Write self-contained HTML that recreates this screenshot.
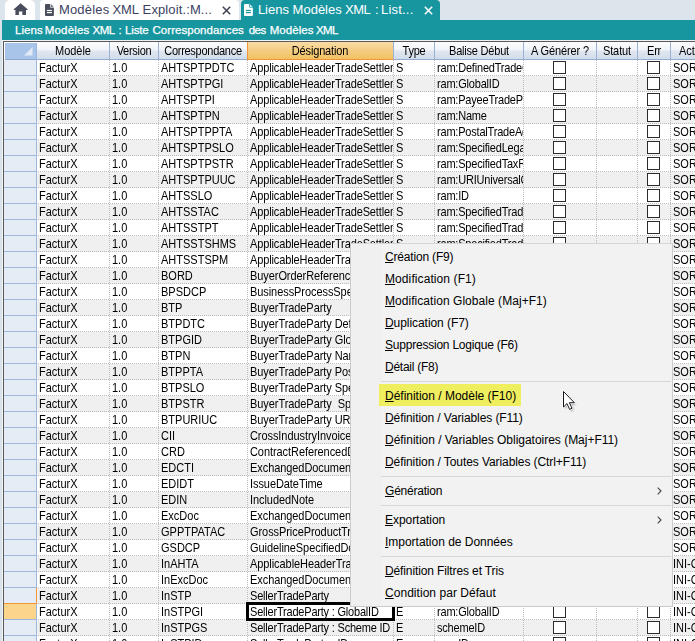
<!DOCTYPE html>
<html lang="fr"><head><meta charset="utf-8"><title>Liens Modèles XML</title>
<style>
html,body{margin:0;padding:0}
body{width:695px;height:641px;overflow:hidden;position:relative;background:#fff;font-family:"Liberation Sans",sans-serif;font-size:11px;color:#000}
#tabbar{position:absolute;left:0;top:0;width:695px;height:20px;background:#dde5ec}
#leftstrip{z-index:3;position:absolute;left:0;top:20px;width:2px;height:621px;background:#dbe3ea}
#leftstrip2{z-index:3;position:absolute;left:2px;top:40px;width:1px;height:601px;background:#eff3f6}
.tab{position:absolute;top:0;height:20px;border-radius:4px 4px 0 0;font-size:13px;line-height:20px;white-space:nowrap}
#t0{left:5px;width:30px;background:#fff;border-radius:5px 5px 0 0}
#t1{left:40px;width:199px;background:#fff;color:#3c4262;letter-spacing:-0.15px}
#t2{left:241px;width:199px;background:#18969f;color:#fff;letter-spacing:-0.1px}
.tab svg{position:absolute}
.tab span{position:absolute;top:0}
#title{position:absolute;left:2px;top:20px;width:693px;height:20px;background:#18969f;color:#fff;font-weight:normal;-webkit-text-stroke:0.25px #fff;font-size:11.5px;line-height:20px;white-space:nowrap}
#title span{position:absolute;top:0}
#gap{position:absolute;left:3px;top:40px;width:692px;height:1px;background:#eef2f5}
#gtop{z-index:3;position:absolute;left:3px;top:41px;width:692px;height:1px;background:#5a5a5a}
#gleft{z-index:3;position:absolute;left:3px;top:41px;width:1px;height:600px;background:#5a5a5a}
#grid{position:absolute;left:0;top:0;width:695px;height:641px}
.hrow{position:absolute;left:0;top:42px;width:695px;height:18px}
.cornerbg{position:absolute;left:4px;top:0;width:33px;height:18px;background:#fff}
.corner{position:absolute;left:5px;top:1px;width:31px;height:16px;background:#a9c4e9;border-right:1px solid #9db7dc;border-bottom:1px solid #8fabd3}
.corner svg{position:absolute;left:19px;top:4px}
.hc{position:absolute;top:0;height:17px;border-right:1px solid #9ab2d5;border-bottom:1px solid #93add2;background:linear-gradient(#fcfdfe 0%,#f1f4f9 45%,#dfe6f0 55%,#d3dcea 100%);text-align:center;line-height:18px;white-space:nowrap;overflow:hidden;font-size:11px;letter-spacing:-0.25px}
.hc.sel{background:linear-gradient(#f9dca6 0%,#f5cd82 50%,#f1c263 100%);border-bottom:1px solid #f29536;box-shadow:inset 1px 0 0 #f29536}
.row{position:absolute;left:0;width:695px;height:15px;border-bottom:1px dotted #bcbcbc;background:#fff}
.row.alt{background:#f0f0f0}
.rh{position:absolute;left:4px;top:0;width:32px;height:15px;background:#e6ecf6;border-right:1px solid #9db7dc;border-bottom:1px solid #9db7dc}
.rh.cur{background:#fdd48c}
.rh.prev{border-right-color:#f29536;border-bottom-color:#f29536}
.c{letter-spacing:0;position:absolute;top:0;height:15px;line-height:15px;border-right:1px dotted #bcbcbc;padding-left:2px;box-sizing:border-box;white-space:nowrap;overflow:hidden}
.c.ck{padding:0}
.c.d{letter-spacing:-0.12px}
.c.e{letter-spacing:-0.07px}
.c.f{letter-spacing:-0.2px}
.c.b{letter-spacing:-0.2px}
.cb{position:absolute;left:50%;margin-left:-7px;top:1px;width:11px;height:11px;border:1px solid #2b2b2b;background:#fff;display:block}
.focus{position:absolute;left:246px;top:602px;width:143px;height:13px;border:3px solid #000}
#menu{position:absolute;left:350px;top:243px;width:321px;height:362px;background:#f2f2f2;border:1px solid #cbcbcb;border-top-color:#d6d6d6;font-size:12px;color:#000}
.mi{position:absolute;left:1px;width:320px;height:22px;line-height:22px;white-space:nowrap}
.mi span{position:absolute;left:33px;top:0}
.mi u{text-decoration:underline;text-underline-offset:1px}
.ms{position:absolute;left:30px;width:290px;height:1px;background:#d7d7d7}
.hl{position:absolute;left:28px;width:142px;height:22px;background:#efee5e}
.chev{position:absolute;left:305.3px}
#cursor{position:absolute;left:560px;top:388px}
.t{display:inline-block;transform:scaleY(1.125);transform-origin:0 11.3px;position:relative;top:1px}
.hc span{display:inline-block;transform:scaleY(1.125);transform-origin:0 12.8px}
#gut{position:absolute;left:0;top:0;width:30px;height:362px;background:#f0f0f0}
</style></head><body>
<div id="tabbar">
<div class="tab" id="t0"><svg style="left:0;top:0" width="30" height="20" viewBox="0 0 30 20"><path d="M15.6 3.2 L22.6 9.3 L22.6 9.9 L21 9.9 L21 14.9 L17.3 14.9 L17.3 11.4 L13.9 11.4 L13.9 14.9 L10.4 14.9 L10.4 9.9 L8.8 9.9 L8.8 9.3 Z" fill="#494d5c"/></svg></div>
<div class="tab" id="t1"><svg style="left:5.3px;top:4.2px" width="10" height="12" viewBox="0 0 10 12"><path d="M1 0 H5.6 L8.9 3.3 V11 Q8.9 12 7.9 12 H1 Q0 12 0 11 V1 Q0 0 1 0 Z" fill="#494d5c"/><rect x="1.9" y="5.9" width="5" height="1.2" fill="#fff"/><rect x="1.9" y="8" width="5" height="1.2" fill="#fff"/><path d="M5.6 0 V3.3 H8.9" fill="none" stroke="#fff" stroke-width="0.8"/></svg><span style="left:18.9px;letter-spacing:0.2px">Modèles</span> <span style="left:72.5px;letter-spacing:-0.15px">XML</span> <span style="left:102.6px;letter-spacing:0.12px">Exploit.:M...</span><svg style="left:182px;top:6px" width="9" height="9" viewBox="0 0 9 9"><path d="M0.8 0.8 L8.2 8.2 M8.2 0.8 L0.8 8.2" stroke="#3c4050" stroke-width="1.5" fill="none"/></svg></div>
<div class="tab" id="t2"><svg style="left:3.3px;top:4.2px" width="10" height="12" viewBox="0 0 10 12"><path d="M1 0 H5.6 L8.9 3.3 V11 Q8.9 12 7.9 12 H1 Q0 12 0 11 V1 Q0 0 1 0 Z" fill="#fff"/><rect x="1.9" y="5.9" width="5" height="1.2" fill="#18969f"/><rect x="1.9" y="8" width="5" height="1.2" fill="#18969f"/><path d="M5.6 0 V3.3 H8.9" fill="none" stroke="#18969f" stroke-width="0.8"/></svg><span style="left:16.9px;letter-spacing:0">Liens</span> <span style="left:51.6px;letter-spacing:0">Modèles</span> <span style="left:104.1px;letter-spacing:-0.5px">XML</span> <span style="left:133.9px">:</span> <span style="left:140px;letter-spacing:0.2px">List...</span><svg style="left:183px;top:6px" width="9" height="9" viewBox="0 0 9 9"><path d="M0.8 0.8 L8.2 8.2 M8.2 0.8 L0.8 8.2" stroke="#fff" stroke-width="1.5" fill="none"/></svg></div>
</div>
<div id="leftstrip"></div><div id="leftstrip2"></div>
<div id="title"><span style="left:13.1px;letter-spacing:0.04px">Liens</span> <span style="left:42.8px;letter-spacing:0.16px">Modèles</span> <span style="left:90.6px;letter-spacing:-0.55px">XML</span> <span style="left:116.5px;letter-spacing:0.00px">:</span> <span style="left:123.1px;letter-spacing:-0.19px">Liste</span> <span style="left:150.5px;letter-spacing:0.04px">Correspondances</span> <span style="left:246.7px;letter-spacing:-0.49px">des</span> <span style="left:267.7px;letter-spacing:0.06px">Modèles</span> <span style="left:313.9px;letter-spacing:-0.55px">XML</span></div>
<div id="gap"></div><div id="gtop"></div><div id="gleft"></div>
<div id="grid">
<div class="hrow">
<div class="cornerbg"></div><div class="corner"><svg width="9" height="9" viewBox="0 0 9 9"><polygon points="8.5,0 8.5,8.5 0,8.5" fill="#e1eaf7"/></svg></div>
<div class="hc" style="left:37px;width:72px"><span style="letter-spacing:-0.05px">Modèle</span></div>
<div class="hc" style="left:110px;width:48px"><span style="letter-spacing:-0.28px">Version</span></div>
<div class="hc" style="left:159px;width:88px"><span style="letter-spacing:-0.27px">Correspondance</span></div>
<div class="hc sel" style="left:247px;width:146px"><span style="letter-spacing:-0.15px">Désignation</span></div>
<div class="hc" style="left:394px;width:40px"><span style="letter-spacing:-0.2px">Type</span></div>
<div class="hc" style="left:435px;width:88px"><span style="letter-spacing:-0.2px">Balise Début</span></div>
<div class="hc" style="left:524px;width:72px"><span style="letter-spacing:-0.1px">A Générer ?</span></div>
<div class="hc" style="left:597px;width:40px"><span style="letter-spacing:-0.1px">Statut</span></div>
<div class="hc" style="left:638px;width:32px"><span style="letter-spacing:-0.3px">Err</span></div>
<div class="hc" style="left:671px;width:29px;text-align:left;padding-left:8px"><span style="letter-spacing:-0.1px">Action</span></div>
</div>
<div class="row" style="top:60px"><div class="rh"></div><div class="c" style="left:37px;width:73px"><span class="t">FacturX</span></div><div class="c" style="left:110px;width:49px"><span class="t">1.0</span></div><div class="c" style="left:159px;width:89px"><span class="t">AHTSPTPDTC</span></div><div class="c d" style="left:248px;width:146px"><span class="t">ApplicableHeaderTradeSettlement</span></div><div class="c" style="left:394px;width:41px"><span class="t">S</span></div><div class="c b" style="left:435px;width:89px"><span class="t">ram:DefinedTradeContact</span></div><div class="c ck" style="left:524px;width:73px"><i class="cb"></i></div><div class="c" style="left:597px;width:41px"></div><div class="c ck" style="left:638px;width:33px"><i class="cb"></i></div><div class="c" style="left:671px;width:30px"><span class="t">SORTIE</span></div></div>
<div class="row alt" style="top:76px"><div class="rh"></div><div class="c" style="left:37px;width:73px"><span class="t">FacturX</span></div><div class="c" style="left:110px;width:49px"><span class="t">1.0</span></div><div class="c" style="left:159px;width:89px"><span class="t">AHTSPTPGI</span></div><div class="c d" style="left:248px;width:146px"><span class="t">ApplicableHeaderTradeSettlement</span></div><div class="c" style="left:394px;width:41px"><span class="t">S</span></div><div class="c b" style="left:435px;width:89px"><span class="t">ram:GlobalID</span></div><div class="c ck" style="left:524px;width:73px"><i class="cb"></i></div><div class="c" style="left:597px;width:41px"></div><div class="c ck" style="left:638px;width:33px"><i class="cb"></i></div><div class="c" style="left:671px;width:30px"><span class="t">SORTIE</span></div></div>
<div class="row" style="top:92px"><div class="rh"></div><div class="c" style="left:37px;width:73px"><span class="t">FacturX</span></div><div class="c" style="left:110px;width:49px"><span class="t">1.0</span></div><div class="c" style="left:159px;width:89px"><span class="t">AHTSPTPI</span></div><div class="c d" style="left:248px;width:146px"><span class="t">ApplicableHeaderTradeSettlement</span></div><div class="c" style="left:394px;width:41px"><span class="t">S</span></div><div class="c b" style="left:435px;width:89px"><span class="t">ram:PayeeTradeParty</span></div><div class="c ck" style="left:524px;width:73px"><i class="cb"></i></div><div class="c" style="left:597px;width:41px"></div><div class="c ck" style="left:638px;width:33px"><i class="cb"></i></div><div class="c" style="left:671px;width:30px"><span class="t">SORTIE</span></div></div>
<div class="row alt" style="top:108px"><div class="rh"></div><div class="c" style="left:37px;width:73px"><span class="t">FacturX</span></div><div class="c" style="left:110px;width:49px"><span class="t">1.0</span></div><div class="c" style="left:159px;width:89px"><span class="t">AHTSPTPN</span></div><div class="c d" style="left:248px;width:146px"><span class="t">ApplicableHeaderTradeSettlement</span></div><div class="c" style="left:394px;width:41px"><span class="t">S</span></div><div class="c b" style="left:435px;width:89px"><span class="t">ram:Name</span></div><div class="c ck" style="left:524px;width:73px"><i class="cb"></i></div><div class="c" style="left:597px;width:41px"></div><div class="c ck" style="left:638px;width:33px"><i class="cb"></i></div><div class="c" style="left:671px;width:30px"><span class="t">SORTIE</span></div></div>
<div class="row" style="top:124px"><div class="rh"></div><div class="c" style="left:37px;width:73px"><span class="t">FacturX</span></div><div class="c" style="left:110px;width:49px"><span class="t">1.0</span></div><div class="c" style="left:159px;width:89px"><span class="t">AHTSPTPPTA</span></div><div class="c d" style="left:248px;width:146px"><span class="t">ApplicableHeaderTradeSettlement</span></div><div class="c" style="left:394px;width:41px"><span class="t">S</span></div><div class="c b" style="left:435px;width:89px"><span class="t">ram:PostalTradeAddress</span></div><div class="c ck" style="left:524px;width:73px"><i class="cb"></i></div><div class="c" style="left:597px;width:41px"></div><div class="c ck" style="left:638px;width:33px"><i class="cb"></i></div><div class="c" style="left:671px;width:30px"><span class="t">SORTIE</span></div></div>
<div class="row alt" style="top:140px"><div class="rh"></div><div class="c" style="left:37px;width:73px"><span class="t">FacturX</span></div><div class="c" style="left:110px;width:49px"><span class="t">1.0</span></div><div class="c" style="left:159px;width:89px"><span class="t">AHTSPTPSLO</span></div><div class="c d" style="left:248px;width:146px"><span class="t">ApplicableHeaderTradeSettlement</span></div><div class="c" style="left:394px;width:41px"><span class="t">S</span></div><div class="c b" style="left:435px;width:89px"><span class="t">ram:SpecifiedLegalOrganization</span></div><div class="c ck" style="left:524px;width:73px"><i class="cb"></i></div><div class="c" style="left:597px;width:41px"></div><div class="c ck" style="left:638px;width:33px"><i class="cb"></i></div><div class="c" style="left:671px;width:30px"><span class="t">SORTIE</span></div></div>
<div class="row" style="top:156px"><div class="rh"></div><div class="c" style="left:37px;width:73px"><span class="t">FacturX</span></div><div class="c" style="left:110px;width:49px"><span class="t">1.0</span></div><div class="c" style="left:159px;width:89px"><span class="t">AHTSPTPSTR</span></div><div class="c d" style="left:248px;width:146px"><span class="t">ApplicableHeaderTradeSettlement</span></div><div class="c" style="left:394px;width:41px"><span class="t">S</span></div><div class="c b" style="left:435px;width:89px"><span class="t">ram:SpecifiedTaxRegistration</span></div><div class="c ck" style="left:524px;width:73px"><i class="cb"></i></div><div class="c" style="left:597px;width:41px"></div><div class="c ck" style="left:638px;width:33px"><i class="cb"></i></div><div class="c" style="left:671px;width:30px"><span class="t">SORTIE</span></div></div>
<div class="row alt" style="top:172px"><div class="rh"></div><div class="c" style="left:37px;width:73px"><span class="t">FacturX</span></div><div class="c" style="left:110px;width:49px"><span class="t">1.0</span></div><div class="c" style="left:159px;width:89px"><span class="t">AHTSPTPUUC</span></div><div class="c d" style="left:248px;width:146px"><span class="t">ApplicableHeaderTradeSettlement</span></div><div class="c" style="left:394px;width:41px"><span class="t">S</span></div><div class="c b" style="left:435px;width:89px"><span class="t">ram:URIUniversalCommunication</span></div><div class="c ck" style="left:524px;width:73px"><i class="cb"></i></div><div class="c" style="left:597px;width:41px"></div><div class="c ck" style="left:638px;width:33px"><i class="cb"></i></div><div class="c" style="left:671px;width:30px"><span class="t">SORTIE</span></div></div>
<div class="row" style="top:188px"><div class="rh"></div><div class="c" style="left:37px;width:73px"><span class="t">FacturX</span></div><div class="c" style="left:110px;width:49px"><span class="t">1.0</span></div><div class="c" style="left:159px;width:89px"><span class="t">AHTSSLO</span></div><div class="c d" style="left:248px;width:146px"><span class="t">ApplicableHeaderTradeSettlement</span></div><div class="c" style="left:394px;width:41px"><span class="t">S</span></div><div class="c b" style="left:435px;width:89px"><span class="t">ram:ID</span></div><div class="c ck" style="left:524px;width:73px"><i class="cb"></i></div><div class="c" style="left:597px;width:41px"></div><div class="c ck" style="left:638px;width:33px"><i class="cb"></i></div><div class="c" style="left:671px;width:30px"><span class="t">SORTIE</span></div></div>
<div class="row alt" style="top:204px"><div class="rh"></div><div class="c" style="left:37px;width:73px"><span class="t">FacturX</span></div><div class="c" style="left:110px;width:49px"><span class="t">1.0</span></div><div class="c" style="left:159px;width:89px"><span class="t">AHTSSTAC</span></div><div class="c d" style="left:248px;width:146px"><span class="t">ApplicableHeaderTradeSettlement</span></div><div class="c" style="left:394px;width:41px"><span class="t">S</span></div><div class="c b" style="left:435px;width:89px"><span class="t">ram:SpecifiedTradeAllowanceCharge</span></div><div class="c ck" style="left:524px;width:73px"><i class="cb"></i></div><div class="c" style="left:597px;width:41px"></div><div class="c ck" style="left:638px;width:33px"><i class="cb"></i></div><div class="c" style="left:671px;width:30px"><span class="t">SORTIE</span></div></div>
<div class="row" style="top:220px"><div class="rh"></div><div class="c" style="left:37px;width:73px"><span class="t">FacturX</span></div><div class="c" style="left:110px;width:49px"><span class="t">1.0</span></div><div class="c" style="left:159px;width:89px"><span class="t">AHTSSTPT</span></div><div class="c d" style="left:248px;width:146px"><span class="t">ApplicableHeaderTradeSettlement</span></div><div class="c" style="left:394px;width:41px"><span class="t">S</span></div><div class="c b" style="left:435px;width:89px"><span class="t">ram:SpecifiedTradePaymentTerms</span></div><div class="c ck" style="left:524px;width:73px"><i class="cb"></i></div><div class="c" style="left:597px;width:41px"></div><div class="c ck" style="left:638px;width:33px"><i class="cb"></i></div><div class="c" style="left:671px;width:30px"><span class="t">SORTIE</span></div></div>
<div class="row alt" style="top:236px"><div class="rh"></div><div class="c" style="left:37px;width:73px"><span class="t">FacturX</span></div><div class="c" style="left:110px;width:49px"><span class="t">1.0</span></div><div class="c" style="left:159px;width:89px"><span class="t">AHTSSTSHMS</span></div><div class="c d" style="left:248px;width:146px"><span class="t">ApplicableHeaderTradeSettlement</span></div><div class="c" style="left:394px;width:41px"><span class="t">S</span></div><div class="c b" style="left:435px;width:89px"><span class="t">ram:SpecifiedTradeSettlementHeader</span></div><div class="c ck" style="left:524px;width:73px"><i class="cb"></i></div><div class="c" style="left:597px;width:41px"></div><div class="c ck" style="left:638px;width:33px"><i class="cb"></i></div><div class="c" style="left:671px;width:30px"><span class="t">SORTIE</span></div></div>
<div class="row" style="top:252px"><div class="rh"></div><div class="c" style="left:37px;width:73px"><span class="t">FacturX</span></div><div class="c" style="left:110px;width:49px"><span class="t">1.0</span></div><div class="c" style="left:159px;width:89px"><span class="t">AHTSSTSPM</span></div><div class="c d" style="left:248px;width:146px"><span class="t">ApplicableHeaderTradeSettlement</span></div><div class="c" style="left:394px;width:41px"><span class="t">S</span></div><div class="c b" style="left:435px;width:89px"><span class="t">ram:SpecifiedTradeSettlementPayment</span></div><div class="c ck" style="left:524px;width:73px"><i class="cb"></i></div><div class="c" style="left:597px;width:41px"></div><div class="c ck" style="left:638px;width:33px"><i class="cb"></i></div><div class="c" style="left:671px;width:30px"><span class="t">SORTIE</span></div></div>
<div class="row alt" style="top:268px"><div class="rh"></div><div class="c" style="left:37px;width:73px"><span class="t">FacturX</span></div><div class="c" style="left:110px;width:49px"><span class="t">1.0</span></div><div class="c" style="left:159px;width:89px"><span class="t">BORD</span></div><div class="c e" style="left:248px;width:146px"><span class="t">BuyerOrderReferencedDocument</span></div><div class="c" style="left:394px;width:41px"><span class="t">S</span></div><div class="c b" style="left:435px;width:89px"><span class="t">ram:BuyerOrderReferencedDocument</span></div><div class="c ck" style="left:524px;width:73px"><i class="cb"></i></div><div class="c" style="left:597px;width:41px"></div><div class="c ck" style="left:638px;width:33px"><i class="cb"></i></div><div class="c" style="left:671px;width:30px"><span class="t">SORTIE</span></div></div>
<div class="row" style="top:284px"><div class="rh"></div><div class="c" style="left:37px;width:73px"><span class="t">FacturX</span></div><div class="c" style="left:110px;width:49px"><span class="t">1.0</span></div><div class="c" style="left:159px;width:89px"><span class="t">BPSDCP</span></div><div class="c e" style="left:248px;width:146px"><span class="t">BusinessProcessSpecifiedDocument</span></div><div class="c" style="left:394px;width:41px"><span class="t">S</span></div><div class="c b" style="left:435px;width:89px"><span class="t">ram:BusinessProcessSpecified</span></div><div class="c ck" style="left:524px;width:73px"><i class="cb"></i></div><div class="c" style="left:597px;width:41px"></div><div class="c ck" style="left:638px;width:33px"><i class="cb"></i></div><div class="c" style="left:671px;width:30px"><span class="t">SORTIE</span></div></div>
<div class="row alt" style="top:300px"><div class="rh"></div><div class="c" style="left:37px;width:73px"><span class="t">FacturX</span></div><div class="c" style="left:110px;width:49px"><span class="t">1.0</span></div><div class="c" style="left:159px;width:89px"><span class="t">BTP</span></div><div class="c e" style="left:248px;width:146px"><span class="t">BuyerTradeParty</span></div><div class="c" style="left:394px;width:41px"><span class="t">S</span></div><div class="c b" style="left:435px;width:89px"><span class="t">ram:BuyerTradeParty</span></div><div class="c ck" style="left:524px;width:73px"><i class="cb"></i></div><div class="c" style="left:597px;width:41px"></div><div class="c ck" style="left:638px;width:33px"><i class="cb"></i></div><div class="c" style="left:671px;width:30px"><span class="t">SORTIE</span></div></div>
<div class="row" style="top:316px"><div class="rh"></div><div class="c" style="left:37px;width:73px"><span class="t">FacturX</span></div><div class="c" style="left:110px;width:49px"><span class="t">1.0</span></div><div class="c" style="left:159px;width:89px"><span class="t">BTPDTC</span></div><div class="c e" style="left:248px;width:146px"><span class="t">BuyerTradeParty DefinedTradeContact</span></div><div class="c" style="left:394px;width:41px"><span class="t">S</span></div><div class="c b" style="left:435px;width:89px"><span class="t">ram:DefinedTradeContact</span></div><div class="c ck" style="left:524px;width:73px"><i class="cb"></i></div><div class="c" style="left:597px;width:41px"></div><div class="c ck" style="left:638px;width:33px"><i class="cb"></i></div><div class="c" style="left:671px;width:30px"><span class="t">SORTIE</span></div></div>
<div class="row alt" style="top:332px"><div class="rh"></div><div class="c" style="left:37px;width:73px"><span class="t">FacturX</span></div><div class="c" style="left:110px;width:49px"><span class="t">1.0</span></div><div class="c" style="left:159px;width:89px"><span class="t">BTPGID</span></div><div class="c e" style="left:248px;width:146px"><span class="t">BuyerTradeParty GlobalID</span></div><div class="c" style="left:394px;width:41px"><span class="t">S</span></div><div class="c b" style="left:435px;width:89px"><span class="t">ram:GlobalID</span></div><div class="c ck" style="left:524px;width:73px"><i class="cb"></i></div><div class="c" style="left:597px;width:41px"></div><div class="c ck" style="left:638px;width:33px"><i class="cb"></i></div><div class="c" style="left:671px;width:30px"><span class="t">SORTIE</span></div></div>
<div class="row" style="top:348px"><div class="rh"></div><div class="c" style="left:37px;width:73px"><span class="t">FacturX</span></div><div class="c" style="left:110px;width:49px"><span class="t">1.0</span></div><div class="c" style="left:159px;width:89px"><span class="t">BTPN</span></div><div class="c e" style="left:248px;width:146px"><span class="t">BuyerTradeParty Name</span></div><div class="c" style="left:394px;width:41px"><span class="t">S</span></div><div class="c b" style="left:435px;width:89px"><span class="t">ram:Name</span></div><div class="c ck" style="left:524px;width:73px"><i class="cb"></i></div><div class="c" style="left:597px;width:41px"></div><div class="c ck" style="left:638px;width:33px"><i class="cb"></i></div><div class="c" style="left:671px;width:30px"><span class="t">SORTIE</span></div></div>
<div class="row alt" style="top:364px"><div class="rh"></div><div class="c" style="left:37px;width:73px"><span class="t">FacturX</span></div><div class="c" style="left:110px;width:49px"><span class="t">1.0</span></div><div class="c" style="left:159px;width:89px"><span class="t">BTPPTA</span></div><div class="c e" style="left:248px;width:146px"><span class="t">BuyerTradeParty PostalTradeAddress</span></div><div class="c" style="left:394px;width:41px"><span class="t">S</span></div><div class="c b" style="left:435px;width:89px"><span class="t">ram:PostalTradeAddress</span></div><div class="c ck" style="left:524px;width:73px"><i class="cb"></i></div><div class="c" style="left:597px;width:41px"></div><div class="c ck" style="left:638px;width:33px"><i class="cb"></i></div><div class="c" style="left:671px;width:30px"><span class="t">SORTIE</span></div></div>
<div class="row" style="top:380px"><div class="rh"></div><div class="c" style="left:37px;width:73px"><span class="t">FacturX</span></div><div class="c" style="left:110px;width:49px"><span class="t">1.0</span></div><div class="c" style="left:159px;width:89px"><span class="t">BTPSLO</span></div><div class="c e" style="left:248px;width:146px"><span class="t">BuyerTradeParty SpecifiedLegalOrganization</span></div><div class="c" style="left:394px;width:41px"><span class="t">S</span></div><div class="c b" style="left:435px;width:89px"><span class="t">ram:SpecifiedLegalOrganization</span></div><div class="c ck" style="left:524px;width:73px"><i class="cb"></i></div><div class="c" style="left:597px;width:41px"></div><div class="c ck" style="left:638px;width:33px"><i class="cb"></i></div><div class="c" style="left:671px;width:30px"><span class="t">SORTIE</span></div></div>
<div class="row alt" style="top:396px"><div class="rh"></div><div class="c" style="left:37px;width:73px"><span class="t">FacturX</span></div><div class="c" style="left:110px;width:49px"><span class="t">1.0</span></div><div class="c" style="left:159px;width:89px"><span class="t">BTPSTR</span></div><div class="c e" style="left:248px;width:146px"><span class="t">BuyerTradeParty&nbsp; SpecifiedTaxRegistration</span></div><div class="c" style="left:394px;width:41px"><span class="t">S</span></div><div class="c b" style="left:435px;width:89px"><span class="t">ram:SpecifiedTaxRegistration</span></div><div class="c ck" style="left:524px;width:73px"><i class="cb"></i></div><div class="c" style="left:597px;width:41px"></div><div class="c ck" style="left:638px;width:33px"><i class="cb"></i></div><div class="c" style="left:671px;width:30px"><span class="t">SORTIE</span></div></div>
<div class="row" style="top:412px"><div class="rh"></div><div class="c" style="left:37px;width:73px"><span class="t">FacturX</span></div><div class="c" style="left:110px;width:49px"><span class="t">1.0</span></div><div class="c" style="left:159px;width:89px"><span class="t">BTPURIUC</span></div><div class="c e" style="left:248px;width:146px"><span class="t">BuyerTradeParty URIUniversalCommunication</span></div><div class="c" style="left:394px;width:41px"><span class="t">S</span></div><div class="c b" style="left:435px;width:89px"><span class="t">ram:URIUniversalCommunication</span></div><div class="c ck" style="left:524px;width:73px"><i class="cb"></i></div><div class="c" style="left:597px;width:41px"></div><div class="c ck" style="left:638px;width:33px"><i class="cb"></i></div><div class="c" style="left:671px;width:30px"><span class="t">SORTIE</span></div></div>
<div class="row alt" style="top:428px"><div class="rh"></div><div class="c" style="left:37px;width:73px"><span class="t">FacturX</span></div><div class="c" style="left:110px;width:49px"><span class="t">1.0</span></div><div class="c" style="left:159px;width:89px"><span class="t">CII</span></div><div class="c e" style="left:248px;width:146px"><span class="t">CrossIndustryInvoice</span></div><div class="c" style="left:394px;width:41px"><span class="t">S</span></div><div class="c b" style="left:435px;width:89px"><span class="t">rsm:CrossIndustryInvoice</span></div><div class="c ck" style="left:524px;width:73px"><i class="cb"></i></div><div class="c" style="left:597px;width:41px"></div><div class="c ck" style="left:638px;width:33px"><i class="cb"></i></div><div class="c" style="left:671px;width:30px"><span class="t">SORTIE</span></div></div>
<div class="row" style="top:444px"><div class="rh"></div><div class="c" style="left:37px;width:73px"><span class="t">FacturX</span></div><div class="c" style="left:110px;width:49px"><span class="t">1.0</span></div><div class="c" style="left:159px;width:89px"><span class="t">CRD</span></div><div class="c e" style="left:248px;width:146px"><span class="t">ContractReferencedDocument</span></div><div class="c" style="left:394px;width:41px"><span class="t">S</span></div><div class="c b" style="left:435px;width:89px"><span class="t">ram:ContractReferencedDocument</span></div><div class="c ck" style="left:524px;width:73px"><i class="cb"></i></div><div class="c" style="left:597px;width:41px"></div><div class="c ck" style="left:638px;width:33px"><i class="cb"></i></div><div class="c" style="left:671px;width:30px"><span class="t">SORTIE</span></div></div>
<div class="row alt" style="top:460px"><div class="rh"></div><div class="c" style="left:37px;width:73px"><span class="t">FacturX</span></div><div class="c" style="left:110px;width:49px"><span class="t">1.0</span></div><div class="c" style="left:159px;width:89px"><span class="t">EDCTI</span></div><div class="c e" style="left:248px;width:146px"><span class="t">ExchangedDocumentContext</span></div><div class="c" style="left:394px;width:41px"><span class="t">S</span></div><div class="c b" style="left:435px;width:89px"><span class="t">rsm:ExchangedDocumentContext</span></div><div class="c ck" style="left:524px;width:73px"><i class="cb"></i></div><div class="c" style="left:597px;width:41px"></div><div class="c ck" style="left:638px;width:33px"><i class="cb"></i></div><div class="c" style="left:671px;width:30px"><span class="t">SORTIE</span></div></div>
<div class="row" style="top:476px"><div class="rh"></div><div class="c" style="left:37px;width:73px"><span class="t">FacturX</span></div><div class="c" style="left:110px;width:49px"><span class="t">1.0</span></div><div class="c" style="left:159px;width:89px"><span class="t">EDIDT</span></div><div class="c e" style="left:248px;width:146px"><span class="t">IssueDateTime</span></div><div class="c" style="left:394px;width:41px"><span class="t">S</span></div><div class="c b" style="left:435px;width:89px"><span class="t">ram:IssueDateTime</span></div><div class="c ck" style="left:524px;width:73px"><i class="cb"></i></div><div class="c" style="left:597px;width:41px"></div><div class="c ck" style="left:638px;width:33px"><i class="cb"></i></div><div class="c" style="left:671px;width:30px"><span class="t">SORTIE</span></div></div>
<div class="row alt" style="top:492px"><div class="rh"></div><div class="c" style="left:37px;width:73px"><span class="t">FacturX</span></div><div class="c" style="left:110px;width:49px"><span class="t">1.0</span></div><div class="c" style="left:159px;width:89px"><span class="t">EDIN</span></div><div class="c e" style="left:248px;width:146px"><span class="t">IncludedNote</span></div><div class="c" style="left:394px;width:41px"><span class="t">S</span></div><div class="c b" style="left:435px;width:89px"><span class="t">ram:IncludedNote</span></div><div class="c ck" style="left:524px;width:73px"><i class="cb"></i></div><div class="c" style="left:597px;width:41px"></div><div class="c ck" style="left:638px;width:33px"><i class="cb"></i></div><div class="c" style="left:671px;width:30px"><span class="t">SORTIE</span></div></div>
<div class="row" style="top:508px"><div class="rh"></div><div class="c" style="left:37px;width:73px"><span class="t">FacturX</span></div><div class="c" style="left:110px;width:49px"><span class="t">1.0</span></div><div class="c" style="left:159px;width:89px"><span class="t">ExcDoc</span></div><div class="c e" style="left:248px;width:146px"><span class="t">ExchangedDocument</span></div><div class="c" style="left:394px;width:41px"><span class="t">S</span></div><div class="c b" style="left:435px;width:89px"><span class="t">rsm:ExchangedDocument</span></div><div class="c ck" style="left:524px;width:73px"><i class="cb"></i></div><div class="c" style="left:597px;width:41px"></div><div class="c ck" style="left:638px;width:33px"><i class="cb"></i></div><div class="c" style="left:671px;width:30px"><span class="t">SORTIE</span></div></div>
<div class="row alt" style="top:524px"><div class="rh"></div><div class="c" style="left:37px;width:73px"><span class="t">FacturX</span></div><div class="c" style="left:110px;width:49px"><span class="t">1.0</span></div><div class="c" style="left:159px;width:89px"><span class="t">GPPTPATAC</span></div><div class="c e" style="left:248px;width:146px"><span class="t">GrossPriceProductTradePrice</span></div><div class="c" style="left:394px;width:41px"><span class="t">S</span></div><div class="c b" style="left:435px;width:89px"><span class="t">ram:GrossPriceProductTradePrice</span></div><div class="c ck" style="left:524px;width:73px"><i class="cb"></i></div><div class="c" style="left:597px;width:41px"></div><div class="c ck" style="left:638px;width:33px"><i class="cb"></i></div><div class="c" style="left:671px;width:30px"><span class="t">SORTIE</span></div></div>
<div class="row" style="top:540px"><div class="rh"></div><div class="c" style="left:37px;width:73px"><span class="t">FacturX</span></div><div class="c" style="left:110px;width:49px"><span class="t">1.0</span></div><div class="c" style="left:159px;width:89px"><span class="t">GSDCP</span></div><div class="c e" style="left:248px;width:146px"><span class="t">GuidelineSpecifiedDocumentContext</span></div><div class="c" style="left:394px;width:41px"><span class="t">S</span></div><div class="c b" style="left:435px;width:89px"><span class="t">ram:GuidelineSpecifiedDocument</span></div><div class="c ck" style="left:524px;width:73px"><i class="cb"></i></div><div class="c" style="left:597px;width:41px"></div><div class="c ck" style="left:638px;width:33px"><i class="cb"></i></div><div class="c" style="left:671px;width:30px"><span class="t">SORTIE</span></div></div>
<div class="row alt" style="top:556px"><div class="rh"></div><div class="c" style="left:37px;width:73px"><span class="t">FacturX</span></div><div class="c" style="left:110px;width:49px"><span class="t">1.0</span></div><div class="c" style="left:159px;width:89px"><span class="t">InAHTA</span></div><div class="c e" style="left:248px;width:146px"><span class="t">ApplicableHeaderTradeAgreement</span></div><div class="c" style="left:394px;width:41px"><span class="t">E</span></div><div class="c b" style="left:435px;width:89px"><span class="t">ram:ApplicableHeaderTradeAgreement</span></div><div class="c ck" style="left:524px;width:73px"><i class="cb"></i></div><div class="c" style="left:597px;width:41px"></div><div class="c ck" style="left:638px;width:33px"><i class="cb"></i></div><div class="c" style="left:671px;width:30px"><span class="t">INI-CONFIG</span></div></div>
<div class="row" style="top:572px"><div class="rh"></div><div class="c" style="left:37px;width:73px"><span class="t">FacturX</span></div><div class="c" style="left:110px;width:49px"><span class="t">1.0</span></div><div class="c" style="left:159px;width:89px"><span class="t">InExcDoc</span></div><div class="c e" style="left:248px;width:146px"><span class="t">ExchangedDocument</span></div><div class="c" style="left:394px;width:41px"><span class="t">E</span></div><div class="c b" style="left:435px;width:89px"><span class="t">rsm:ExchangedDocument</span></div><div class="c ck" style="left:524px;width:73px"><i class="cb"></i></div><div class="c" style="left:597px;width:41px"></div><div class="c ck" style="left:638px;width:33px"><i class="cb"></i></div><div class="c" style="left:671px;width:30px"><span class="t">INI-CONFIG</span></div></div>
<div class="row alt" style="top:588px"><div class="rh prev"></div><div class="c" style="left:37px;width:73px"><span class="t">FacturX</span></div><div class="c" style="left:110px;width:49px"><span class="t">1.0</span></div><div class="c" style="left:159px;width:89px"><span class="t">InSTP</span></div><div class="c f" style="left:248px;width:146px"><span class="t">SellerTradeParty</span></div><div class="c" style="left:394px;width:41px"><span class="t">E</span></div><div class="c b" style="left:435px;width:89px"><span class="t">ram:SellerTradeParty</span></div><div class="c ck" style="left:524px;width:73px"><i class="cb"></i></div><div class="c" style="left:597px;width:41px"></div><div class="c ck" style="left:638px;width:33px"><i class="cb"></i></div><div class="c" style="left:671px;width:30px"><span class="t">INI-CONFIG</span></div></div>
<div class="row" style="top:604px"><div class="rh cur"></div><div class="c" style="left:37px;width:73px"><span class="t">FacturX</span></div><div class="c" style="left:110px;width:49px"><span class="t">1.0</span></div><div class="c" style="left:159px;width:89px"><span class="t">InSTPGI</span></div><div class="c f" style="left:248px;width:146px"><span class="t">SellerTradeParty : GlobalID</span></div><div class="c" style="left:394px;width:41px"><span class="t">E</span></div><div class="c b" style="left:435px;width:89px"><span class="t">ram:GlobalID</span></div><div class="c ck" style="left:524px;width:73px"><i class="cb"></i></div><div class="c" style="left:597px;width:41px"></div><div class="c ck" style="left:638px;width:33px"><i class="cb"></i></div><div class="c" style="left:671px;width:30px"><span class="t">INI-CONFIG</span></div></div>
<div class="row alt" style="top:620px"><div class="rh"></div><div class="c" style="left:37px;width:73px"><span class="t">FacturX</span></div><div class="c" style="left:110px;width:49px"><span class="t">1.0</span></div><div class="c" style="left:159px;width:89px"><span class="t">InSTPGS</span></div><div class="c f" style="left:248px;width:146px"><span class="t">SellerTradeParty : Scheme ID</span></div><div class="c" style="left:394px;width:41px"><span class="t">E</span></div><div class="c b" style="left:435px;width:89px"><span class="t">schemeID</span></div><div class="c ck" style="left:524px;width:73px"><i class="cb"></i></div><div class="c" style="left:597px;width:41px"></div><div class="c ck" style="left:638px;width:33px"><i class="cb"></i></div><div class="c" style="left:671px;width:30px"><span class="t">INI-CONFIG</span></div></div>
<div class="row" style="top:636px"><div class="rh"></div><div class="c" style="left:37px;width:73px"><span class="t">FacturX</span></div><div class="c" style="left:110px;width:49px"><span class="t">1.0</span></div><div class="c" style="left:159px;width:89px"><span class="t">InSTPID</span></div><div class="c f" style="left:248px;width:146px"><span class="t">SellerTradeParty : ID</span></div><div class="c" style="left:394px;width:41px"><span class="t">E</span></div><div class="c b" style="left:435px;width:89px"><span class="t">ram:ID</span></div><div class="c ck" style="left:524px;width:73px"><i class="cb"></i></div><div class="c" style="left:597px;width:41px"></div><div class="c ck" style="left:638px;width:33px"><i class="cb"></i></div><div class="c" style="left:671px;width:30px"><span class="t">INI-CONFIG</span></div></div>
<div class="focus"></div>
</div>
<div id="menu">
<div id="gut"></div>
<div class="mi" style="top:2px"><span style="letter-spacing:-0.18px"><u>C</u>réation (F9)</span></div>
<div class="mi" style="top:24px"><span style="letter-spacing:0.09px"><u>M</u>odification (F1)</span></div>
<div class="mi" style="top:46px"><span style="letter-spacing:0.05px"><u>M</u>odification Globale (Maj+F1)</span></div>
<div class="mi" style="top:68px"><span style="letter-spacing:-0.06px"><u>D</u>uplication (F7)</span></div>
<div class="mi" style="top:90px"><span style="letter-spacing:-0.22px"><u>S</u>uppression Logique (F6)</span></div>
<div class="mi" style="top:112px"><span style="letter-spacing:-0.26px"><u>D</u>étail (F8)</span></div>
<div class="ms" style="top:137px"></div>
<div class="hl" style="top:140px"></div>
<div class="mi" style="top:141px"><span style="letter-spacing:-0.01px"><u>D</u>éfinition / Modèle (F10)</span></div>
<div class="mi" style="top:163px"><span style="letter-spacing:-0.09px"><u>D</u>éfinition / Variables (F11)</span></div>
<div class="mi" style="top:185px"><span style="letter-spacing:-0.02px"><u>D</u>éfinition / Variables Obligatoires (Maj+F11)</span></div>
<div class="mi" style="top:207px"><span style="letter-spacing:-0.08px"><u>D</u>éfinition / Toutes Variables (Ctrl+F11)</span></div>
<div class="ms" style="top:232px"></div>
<div class="mi" style="top:236px"><span style="letter-spacing:-0.22px"><u>G</u>énération</span><svg class="chev" style="top:6.5px" width="5" height="8" viewBox="0 0 5 8"><path d="M0.7 0.7 L4 4 L0.7 7.3" fill="none" stroke="#444" stroke-width="1.1"/></svg></div>
<div class="ms" style="top:261px"></div>
<div class="mi" style="top:265px"><span style="letter-spacing:-0.05px"><u>E</u>xportation</span><svg class="chev" style="top:6.5px" width="5" height="8" viewBox="0 0 5 8"><path d="M0.7 0.7 L4 4 L0.7 7.3" fill="none" stroke="#444" stroke-width="1.1"/></svg></div>
<div class="mi" style="top:287px"><span style="letter-spacing:-0.02px"><u>I</u>mportation de Données</span></div>
<div class="ms" style="top:312px"></div>
<div class="mi" style="top:316px"><span style="letter-spacing:-0.12px"><u>D</u>éfinition Filtres et Tris</span></div>
<div class="mi" style="top:338px"><span style="letter-spacing:0.04px"><u>C</u>ondition par Défaut</span></div>
</div>
<svg id="cursor" width="22" height="28" viewBox="0 0 22 28"><defs><filter id="sh" x="-40%" y="-40%" width="200%" height="200%"><feGaussianBlur stdDeviation="1.1"/></filter></defs><path d="M5 5 V20.5 L8.5 17.1 L11.1 22.9 L13.5 21.8 L10.9 16.2 L15.9 16.2 Z" fill="#000" opacity="0.45" filter="url(#sh)"/><path d="M3.5 3.5 V19 L7 15.6 L9.6 21.4 L12 20.3 L9.4 14.7 L14.4 14.7 Z" fill="#fff" stroke="#fff" stroke-width="2.4" stroke-linejoin="round" opacity="0.9"/><path d="M3.5 3.5 V19 L7 15.6 L9.6 21.4 L12 20.3 L9.4 14.7 L14.4 14.7 Z" fill="#fff" stroke="#14141c" stroke-width="1" stroke-linejoin="miter"/></svg>
</body></html>
